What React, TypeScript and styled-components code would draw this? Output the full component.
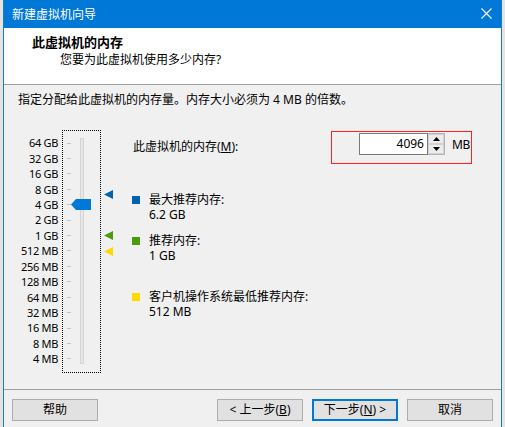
import styled, { createGlobalStyle } from 'styled-components'

const ROW = 15.43
const START = 5.3

const scaleLabels = [
  '64 GB', '32 GB', '16 GB', '8 GB', '4 GB', '2 GB', '1 GB',
  '512 MB', '256 MB', '128 MB', '64 MB', '32 MB', '16 MB', '8 MB', '4 MB',
]

// position on the scale (0 = 64 GB row) for a size in MB
const rowOf = (mb: number) => 16 - Math.log2(mb)
const yOf = (mb: number) => START + ROW * (rowOf(mb) + 0.5)

const markers = [
  { mb: 6.2 * 1024, color: '#0063b1' },
  { mb: 1024, color: '#4a9a0e' },
  { mb: 512, color: '#ffd800' },
]

const legend = [
  { label: '最大推荐内存:', value: '6.2 GB', color: '#0063b1', gap: 27.5 },
  { label: '推荐内存:', value: '1 GB', color: '#4a9a0e', gap: 11 },
  { label: '客户机操作系统最低推荐内存:', value: '512 MB', color: '#ffd800', gap: 26 },
]

const GlobalStyle = createGlobalStyle`
  body {
    margin: 0;
    background: #e4e4e4;
    font-family: "Noto Sans", "Noto Sans CJK SC", sans-serif;
    font-size: 12px;
    color: #000;
  }
`

const Window = styled.div`
  margin-left: 3px;
  width: 499px;
  height: 427px;
  box-sizing: border-box;
  border-left: 1px solid #1a78d0;
  border-right: 1px solid #1a78d0;
  background: #f0f0f0;
  display: flex;
  flex-direction: column;
  overflow: hidden;
`

const TitleBar = styled.div`
  height: 28px;
  flex-shrink: 0;
  background: #0078d7;
  color: #fff;
  display: flex;
  align-items: center;
  justify-content: space-between;
  padding: 0 9px 1px 8px;
  box-sizing: border-box;
`

const Header = styled.div`
  height: 57px;
  flex-shrink: 0;
  box-sizing: border-box;
  background: #fff;
  border-bottom: 1px solid #a0a0a0;
  padding: 7px 0 0 28px;
`

const HeaderTitle = styled.div`
  font-weight: bold;
  font-size: 13px;
  line-height: 15px;
`

const HeaderSub = styled.div`
  margin: 2px 0 0 28px;
  line-height: 15px;
`

const Body = styled.div`
  flex: 1;
  padding-top: 8px;
`

const Description = styled.div`
  padding-left: 14px;
  line-height: 14px;
`

const Main = styled.div`
  margin-top: 23px;
  display: flex;
  align-items: flex-start;
`

const ScaleLabels = styled.div`
  width: 54px;
  margin-right: 4px;
  padding-top: ${START}px;
  display: flex;
  flex-direction: column;
`

const ScaleLabel = styled.div`
  height: ${ROW}px;
  line-height: ${ROW}px;
  text-align: right;
  font-size: 11px;
  letter-spacing: -0.3px;
`

const SliderBox = styled.div`
  position: relative;
  width: 39px;
  height: 243px;
  box-sizing: border-box;
  border: 1px dotted #000;
  display: flex;
  align-items: flex-start;
`

const Ticks = styled.div`
  margin-left: 4px;
  padding-top: ${START - 1}px;
  display: flex;
  flex-direction: column;
`

const Tick = styled.div`
  height: ${ROW}px;
  display: flex;
  align-items: center;

  &::after {
    content: '';
    width: 4px;
    height: 1px;
    background: #c4c4c4;
  }
`

const Track = styled.div`
  margin: 7px 0 0 9px;
  width: 4px;
  height: 226px;
  box-sizing: border-box;
  background: #e7e7e7;
  border: 1px solid #d4d4d4;
`

const Thumb = styled.svg`
  position: absolute;
  left: 8px;
`

const MarkerColumn = styled.div`
  position: relative;
  width: 31px;
  height: 243px;
`

const Marker = styled.svg`
  position: absolute;
  left: 3px;
`

const RightPanel = styled.div`
  width: 340px;
  display: flex;
  flex-direction: column;
`

const MemoryRow = styled.div`
  margin-top: 1px;
  height: 33px;
  display: flex;
  align-items: center;
  justify-content: space-between;
`

const MemLabel = styled.div`
  margin-left: 1px;
  padding-bottom: 4px;
`

const RedBox = styled.div`
  width: 141px;
  height: 33px;
  box-sizing: border-box;
  border-width: 1px;
  border-style: solid;
  border-color: #ff2020;
  display: flex;
  align-items: flex-start;
  padding: 1px 0 0 27px;
`

const NumberInput = styled.div`
  width: 69px;
  height: 22px;
  box-sizing: border-box;
  border: 1px solid #7a7a7a;
  background: #fff;
  text-align: right;
  padding-right: 3px;
  line-height: 20px;
`

const Spinner = styled.div`
  width: 17px;
  height: 22px;
  box-sizing: border-box;
  border: 1px solid #b4b4b4;
  border-left: none;
  display: flex;
  flex-direction: column;
  background: #f0f0f0;
`

const SpinButton = styled.div`
  flex: 1;
  display: flex;
  align-items: center;
  justify-content: center;
  border: 1px solid #d2d2d2;
  background: #ececec;
`

const Unit = styled.div`
  margin-left: 7px;
  line-height: 22px;
  padding-top: 1px;
  letter-spacing: -0.3px;
`

const LegendItem = styled.div<{ $gap: number }>`
  margin-top: ${(p) => p.$gap}px;
  display: flex;
  align-items: flex-start;
`

const Swatch = styled.div<{ $color: string }>`
  width: 8px;
  height: 8px;
  margin: 4px 9px 0 0;
  background: ${(p) => p.$color};
`

const LegendText = styled.div`
  display: flex;
  flex-direction: column;
`

const LegendLine = styled.div`
  height: 15px;
  line-height: 15px;
`

const Footer = styled.div`
  flex-shrink: 0;
  border-top: 1px solid #a0a0a0;
  padding: 9px 8px 6px;
  display: flex;
  gap: 9px;
`

const Button = styled.div<{ $primary?: boolean }>`
  width: 86px;
  height: 22px;
  box-sizing: border-box;
  background: #e1e1e1;
  border: ${(p) => (p.$primary ? '2px solid #0078d7' : '1px solid #adadad')};
  display: flex;
  align-items: center;
  justify-content: center;
  line-height: 14px;

  &:first-child {
    margin-right: auto;
  }
`

const Key = styled.span`
  text-decoration: underline;
`

const App = () => {
  return (
    <>
      <GlobalStyle />
      <Window>
        <TitleBar>
          <span>新建虚拟机向导</span>
          <svg width="11" height="11" viewBox="0 0 11 11">
            <path d="M0.5 0.5 L10.5 10.5 M10.5 0.5 L0.5 10.5" stroke="#fff" strokeWidth="1.1" />
          </svg>
        </TitleBar>
        <Header>
          <HeaderTitle>此虚拟机的内存</HeaderTitle>
          <HeaderSub>您要为此虚拟机使用多少内存?</HeaderSub>
        </Header>
        <Body>
          <Description>指定分配给此虚拟机的内存量。内存大小必须为 4 MB 的倍数。</Description>
          <Main>
            <ScaleLabels>
              {scaleLabels.map((l) => (
                <ScaleLabel key={l}>{l}</ScaleLabel>
              ))}
            </ScaleLabels>
            <SliderBox>
              <Ticks>
                {scaleLabels.map((l) => (
                  <Tick key={l} />
                ))}
              </Ticks>
              <Track />
              <Thumb
                width="20"
                height="11"
                viewBox="0 0 20 11"
                style={{ top: yOf(4096) - 1 - 5.5 }}
              >
                <polygon points="0,5.5 5,0 20,0 20,11 5,11" fill="#0078d7" />
              </Thumb>
            </SliderBox>
            <MarkerColumn>
              {markers.map((m) => (
                <Marker
                  key={m.mb}
                  width="9"
                  height="9"
                  viewBox="0 0 9 9"
                  style={{ top: yOf(m.mb) - 4.5 }}
                >
                  <polygon points="0,4.5 9,0 9,9" fill={m.color} />
                </Marker>
              ))}
            </MarkerColumn>
            <RightPanel>
              <MemoryRow>
                <MemLabel>
                  此虚拟机的内存(<Key>M</Key>):
                </MemLabel>
                <RedBox>
                  <NumberInput>4096</NumberInput>
                  <Spinner>
                    <SpinButton>
                      <svg width="7" height="4" viewBox="0 0 7 4">
                        <polygon points="0,4 3.5,0 7,4" fill="#000" />
                      </svg>
                    </SpinButton>
                    <SpinButton>
                      <svg width="7" height="4" viewBox="0 0 7 4">
                        <polygon points="0,0 7,0 3.5,4" fill="#000" />
                      </svg>
                    </SpinButton>
                  </Spinner>
                  <Unit>MB</Unit>
                </RedBox>
              </MemoryRow>
              {legend.map((item) => (
                <LegendItem key={item.label} $gap={item.gap}>
                  <Swatch $color={item.color} />
                  <LegendText>
                    <LegendLine>{item.label}</LegendLine>
                    <LegendLine>{item.value}</LegendLine>
                  </LegendText>
                </LegendItem>
              ))}
            </RightPanel>
          </Main>
        </Body>
        <Footer>
          <Button>帮助</Button>
          <Button>
            &lt; 上一步(<Key>B</Key>)
          </Button>
          <Button $primary>
            下一步(<Key>N</Key>) &gt;
          </Button>
          <Button>取消</Button>
        </Footer>
      </Window>
    </>
  )
}

export default App
